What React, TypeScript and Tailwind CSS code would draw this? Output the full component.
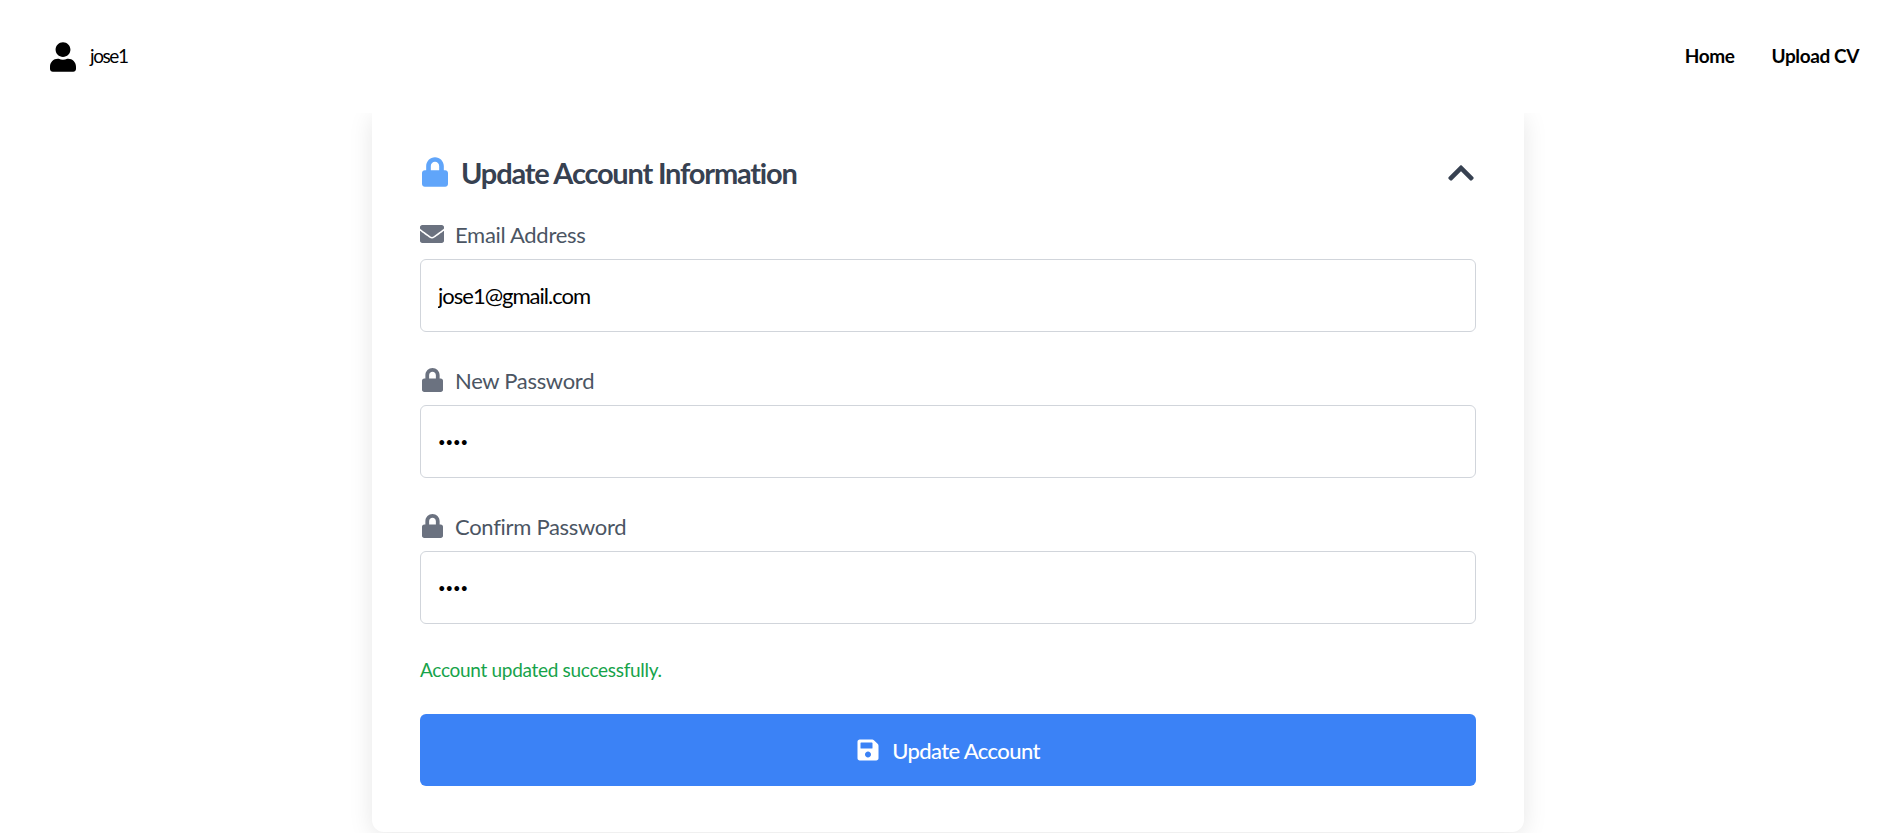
import { FaChevronUp, FaEnvelope, FaLock, FaSave, FaUser } from 'react-icons/fa';

const font = "font-['Lato',sans-serif]";

function Field({ label, value, type, icon }: { label: string; value: string; type: string; icon: React.ReactNode }) {
  return (
    <div>
      <label className="flex h-[24px] items-center text-[22px] text-[#4b5563] tracking-[-0.3px]">
        <span className="mr-[11px] flex w-[24px] justify-center text-[#6b7280]">{icon}</span>
        {label}
      </label>
      <input
        readOnly
        type={type}
        value={value}
        className={
          type === 'password'
            ? 'mt-[13px] block h-[73px] w-full rounded-md border border-[#d1d5db] bg-white px-[17px] text-[13px] text-black outline-none'
            : 'mt-[13px] block h-[73px] w-full rounded-md border border-[#d1d5db] bg-white px-[17px] text-[22px] tracking-[-1px] text-black outline-none'
        }
      />
    </div>
  );
}

export default function App() {
  return (
    <div className={`h-screen overflow-hidden bg-white ${font}`}>
      {/* Nav */}
      <nav className="relative z-10 flex h-[113px] items-center justify-between bg-white pl-[50px] pr-[30px]">
        <div className="flex items-center gap-[14px] text-black">
          <FaUser className="h-[30px] w-[26px]" />
          <span className="text-[19px] tracking-[-1.4px]">jose1</span>
        </div>
        <div className="flex items-center gap-[37px] text-[19px] font-bold tracking-[-0.4px] text-black">
          <a href="#">Home</a>
          <a href="#">Upload CV</a>
        </div>
      </nav>

      {/* Card */}
      <main className="ml-[372px] h-[719px] w-[1152px] rounded-b-xl bg-white px-[48px] pt-[44px] shadow-[0_4px_24px_rgba(0,0,0,0.1)]">
        <div className="flex h-[32px] items-center justify-between">
          <h2 className="flex items-center text-[29px] font-bold tracking-[-1.2px] text-[#374151]">
            <FaLock className="mb-[2px] ml-[2px] mr-[13px] h-[30px] w-[26px] text-[#60a5fa]" />
            Update Account Information
          </h2>
          <FaChevronUp className="mr-[2px] h-[30px] w-[26px] text-[#374151]" />
        </div>

        <div className="mt-[33px] flex flex-col gap-[36px]">
          <Field label="Email Address" value="jose1@gmail.com" type="text" icon={<FaEnvelope className="h-[24px] w-[24px]" />} />
          <Field label="New Password" value="1234" type="password" icon={<FaLock className="h-[24px] w-[21px]" />} />
          <Field label="Confirm Password" value="1234" type="password" icon={<FaLock className="h-[24px] w-[21px]" />} />
        </div>

        <p className="mt-[33px] h-[26px] text-[19px] leading-[26px] tracking-[-0.3px] text-[#16a34a]">Account updated successfully.</p>

        <button className="mt-[31px] flex h-[72px] w-full items-center justify-center gap-[12px] rounded-md bg-[#3b82f6] text-[22px] font-medium tracking-[-0.6px] text-white">
          <FaSave className="h-[24px] w-[24px]" />
          Update Account
        </button>
      </main>
    </div>
  );
}
